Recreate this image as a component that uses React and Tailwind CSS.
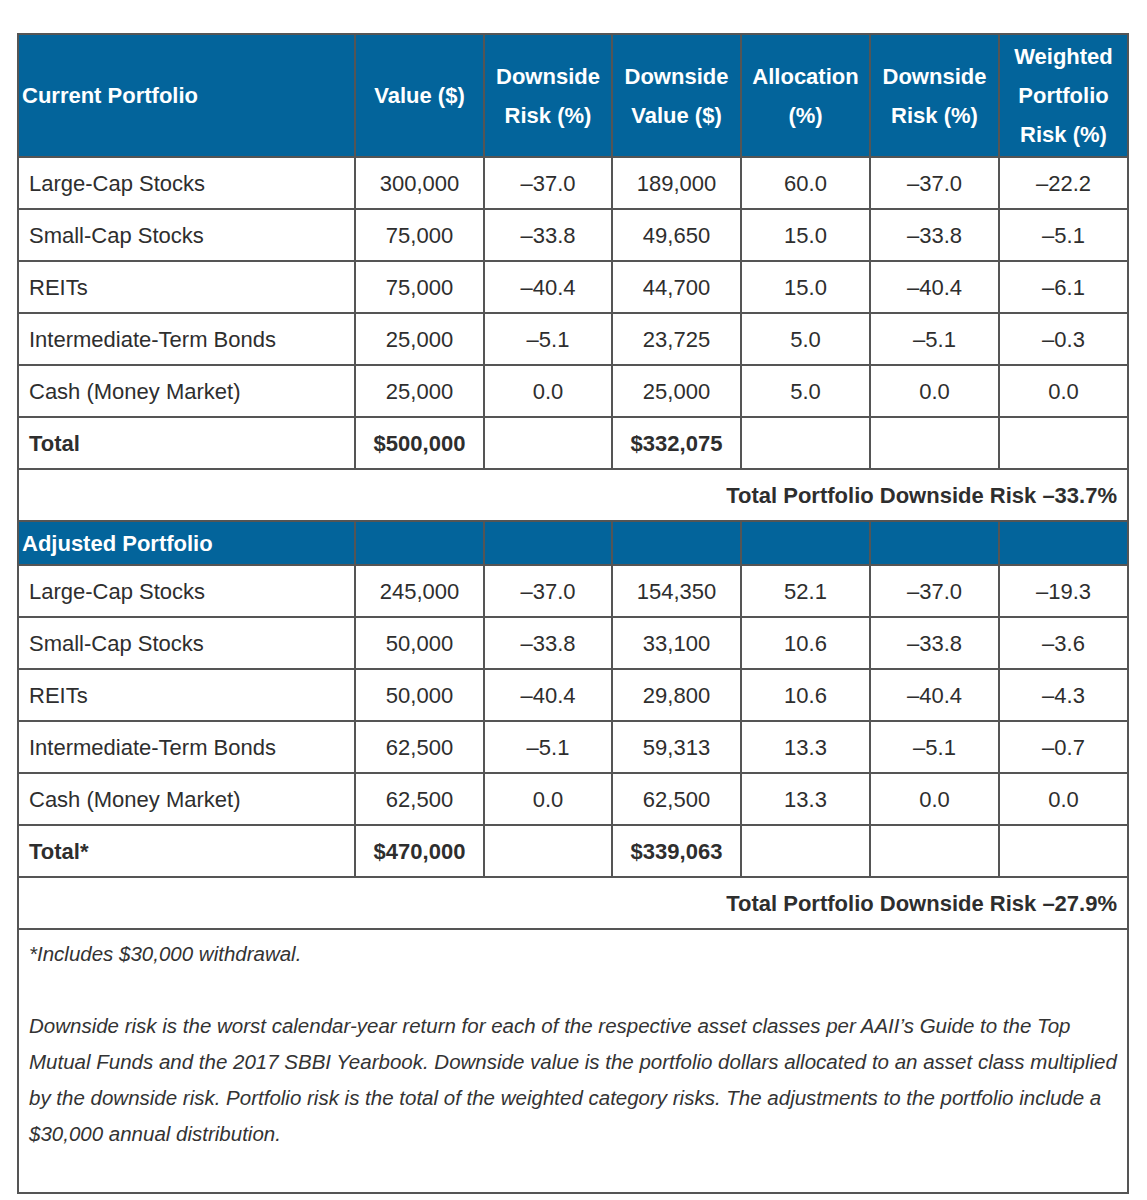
import React from 'react';

const current = [
  ['Large-Cap Stocks', '300,000', '–37.0', '189,000', '60.0', '–37.0', '–22.2'],
  ['Small-Cap Stocks', '75,000', '–33.8', '49,650', '15.0', '–33.8', '–5.1'],
  ['REITs', '75,000', '–40.4', '44,700', '15.0', '–40.4', '–6.1'],
  ['Intermediate-Term Bonds', '25,000', '–5.1', '23,725', '5.0', '–5.1', '–0.3'],
  ['Cash (Money Market)', '25,000', '0.0', '25,000', '5.0', '0.0', '0.0'],
];

const adjusted = [
  ['Large-Cap Stocks', '245,000', '–37.0', '154,350', '52.1', '–37.0', '–19.3'],
  ['Small-Cap Stocks', '50,000', '–33.8', '33,100', '10.6', '–33.8', '–3.6'],
  ['REITs', '50,000', '–40.4', '29,800', '10.6', '–40.4', '–4.3'],
  ['Intermediate-Term Bonds', '62,500', '–5.1', '59,313', '13.3', '–5.1', '–0.7'],
  ['Cash (Money Market)', '62,500', '0.0', '62,500', '13.3', '0.0', '0.0'],
];

const cell = 'border-2 border-[#555555] px-[10px] h-[52px] align-middle';

const DataRows = ({ rows }) =>
  rows.map((r) => (
    <tr key={r[0]}>
      {r.map((v, i) => (
        <td key={i} className={`${cell} ${i === 0 ? 'text-left' : 'text-center'}`}>{v}</td>
      ))}
    </tr>
  ));

const TotalRow = ({ label, value, downValue }) => (
  <tr className="font-bold">
    <td className={`${cell} text-left`}>{label}</td>
    <td className={`${cell} text-center`}>{value}</td>
    <td className={cell}></td>
    <td className={`${cell} text-center`}>{downValue}</td>
    <td className={cell}></td>
    <td className={cell}></td>
    <td className={cell}></td>
  </tr>
);

const SummaryRow = ({ text }) => (
  <tr>
    <td colSpan={7} className={`${cell} text-right font-bold`}>{text}</td>
  </tr>
);

export default function App() {
  const th = 'border-2 border-[#555555] bg-[#03649b] text-white font-bold text-center align-middle px-[3px] leading-[39px]';
  return (
    <div className="bg-white min-h-[1200px] pt-[33px] pl-[17px]" style={{ fontFamily: '"Liberation Sans", Arial, sans-serif' }}>
      <table className="table-fixed border-collapse w-[1110px] text-[22px] text-[#2e2e2e]">
        <colgroup>
          <col className="w-[337px]" />
          <col className="w-[129px]" />
          <col className="w-[128px]" />
          <col className="w-[129px]" />
          <col className="w-[129px]" />
          <col className="w-[129px]" />
          <col className="w-[129px]" />
        </colgroup>
        <thead>
          <tr className="h-[123px]">
            <th className={`${th} text-left`} style={{ textAlign: 'left' }}>Current Portfolio</th>
            <th className={th}>Value ($)</th>
            <th className={th}>Downside Risk (%)</th>
            <th className={th}>Downside Value ($)</th>
            <th className={th}>Allocation (%)</th>
            <th className={th}>Downside Risk (%)</th>
            <th className={th}>Weighted Portfolio Risk (%)</th>
          </tr>
        </thead>
        <tbody>
          <DataRows rows={current} />
          <TotalRow label="Total" value="$500,000" downValue="$332,075" />
          <SummaryRow text="Total Portfolio Downside Risk –33.7%" />
          <tr className="h-[44px]">
            <td className={`${th} text-left`} style={{ textAlign: 'left' }}>Adjusted Portfolio</td>
            <td className={th}></td>
            <td className={th}></td>
            <td className={th}></td>
            <td className={th}></td>
            <td className={th}></td>
            <td className={th}></td>
          </tr>
          <DataRows rows={adjusted} />
          <TotalRow label="Total*" value="$470,000" downValue="$339,063" />
          <SummaryRow text="Total Portfolio Downside Risk –27.9%" />
          <tr>
            <td colSpan={7} className="border-2 border-[#555555] px-[10px] pt-[6px] pb-[40px] align-top italic text-[20.5px] leading-[36px] text-[#333333]">
              <p>*Includes $30,000 withdrawal.</p>
              <p className="mt-[36px]">
                Downside risk is the worst calendar-year return for each of the respective asset classes per AAII’s Guide to the Top Mutual Funds and the 2017 SBBI Yearbook. Downside value is the portfolio dollars allocated to an asset class multiplied by the downside risk. Portfolio risk is the total of the weighted category risks. The adjustments to the portfolio include a $30,000 annual distribution.
              </p>
            </td>
          </tr>
        </tbody>
      </table>
    </div>
  );
}
